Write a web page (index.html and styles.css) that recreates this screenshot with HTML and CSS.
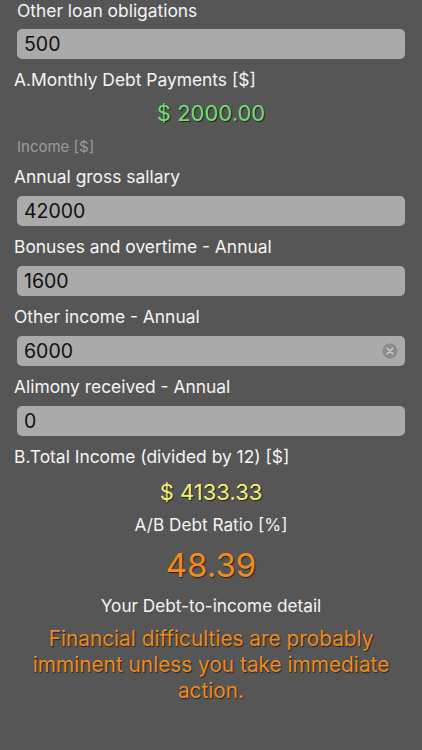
FILE: index.html
```html
<!DOCTYPE html>
<html>
<head>
<meta charset="utf-8">
<link rel="stylesheet" href="styles.css">
</head>
<body>
<div class="page">
  <div class="label first">Other loan obligations</div>
  <div class="input">500</div>
  <div class="label section">A.Monthly Debt Payments [$]</div>
  <div class="value green">$ 2000.00</div>
  <div class="subhead">Income [$]</div>
  <div class="label section">Annual gross sallary</div>
  <div class="input">42000</div>
  <div class="label section">Bonuses and overtime - Annual</div>
  <div class="input">1600</div>
  <div class="label section">Other income - Annual</div>
  <div class="input with-clear">6000
    <svg class="clear" width="16" height="16" viewBox="0 0 16 16"><circle cx="8" cy="8" r="7.5" fill="#8b8b8b"/><path d="M5.3 5.3 L10.7 10.7 M10.7 5.3 L5.3 10.7" stroke="#c4c4c4" stroke-width="1.8" stroke-linecap="round"/></svg>
  </div>
  <div class="label section">Alimony received - Annual</div>
  <div class="input">0</div>
  <div class="label section">B.Total Income (divided by 12) [$]</div>
  <div class="value yellow">$ 4133.33</div>
  <div class="center-label">A/B Debt Ratio [%]</div>
  <div class="ratio">48.39</div>
  <div class="center-label detail">Your Debt-to-income detail</div>
  <div class="message">Financial difficulties are probably imminent unless you take immediate action.</div>
</div>
</body>
</html>
```
FILE: styles.css
```css
html, body {
  margin: 0;
  padding: 0;
  background: #565656;
  height: 100%;
}
body {
  font-family: Inter, "Liberation Sans", sans-serif;
  color: #f4f4f4;
}
.page {
  display: flex;
  flex-direction: column;
  padding: 0 17px;
}
.label {
  font-size: 17.4px;
  line-height: 21px;
  height: 21px;
  margin-top: 10px;
  margin-bottom: 9px;
  white-space: nowrap;
}
.label.first {
  margin-top: 0;
  margin-bottom: 8px;
}
.label.section {
  margin-left: -3px;
}
.input {
  position: relative;
  height: 30px;
  background: #aaaaaa;
  border-radius: 5px;
  color: #111;
  font-size: 19.5px;
  line-height: 30px;
  padding-left: 7px;
}
.clear {
  position: absolute;
  right: 7px;
  top: 7px;
}
.value {
  text-align: center;
  font-size: 22px;
  line-height: 26px;
  margin-top: 1px;
  text-shadow: 1px 1px 1px rgba(0,0,0,0.6);
}
.green { color: #72de72; }
.yellow {
  color: #f2f276;
  margin-top: 3px;
}
.subhead {
  color: #9c9c9c;
  font-size: 15px;
  line-height: 20px;
  margin-top: 11px;
  margin-bottom: -1px;
}
.center-label {
  text-align: center;
  font-size: 17.2px;
  line-height: 21px;
  margin-top: 9px;
}
.ratio {
  text-align: center;
  color: #f48a1e;
  font-size: 33px;
  line-height: 40px;
  margin-top: 10px;
  text-shadow: 1px 1px 1px rgba(0,0,0,0.6);
}
.detail {
  margin-top: 10px;
}
.message {
  text-align: center;
  color: #ee8a1e;
  font-size: 20.8px;
  line-height: 26px;
  margin-top: 10px;
  padding: 0 2px;
  text-shadow: 1px 1px 1px rgba(0,0,0,0.6);
}
```
